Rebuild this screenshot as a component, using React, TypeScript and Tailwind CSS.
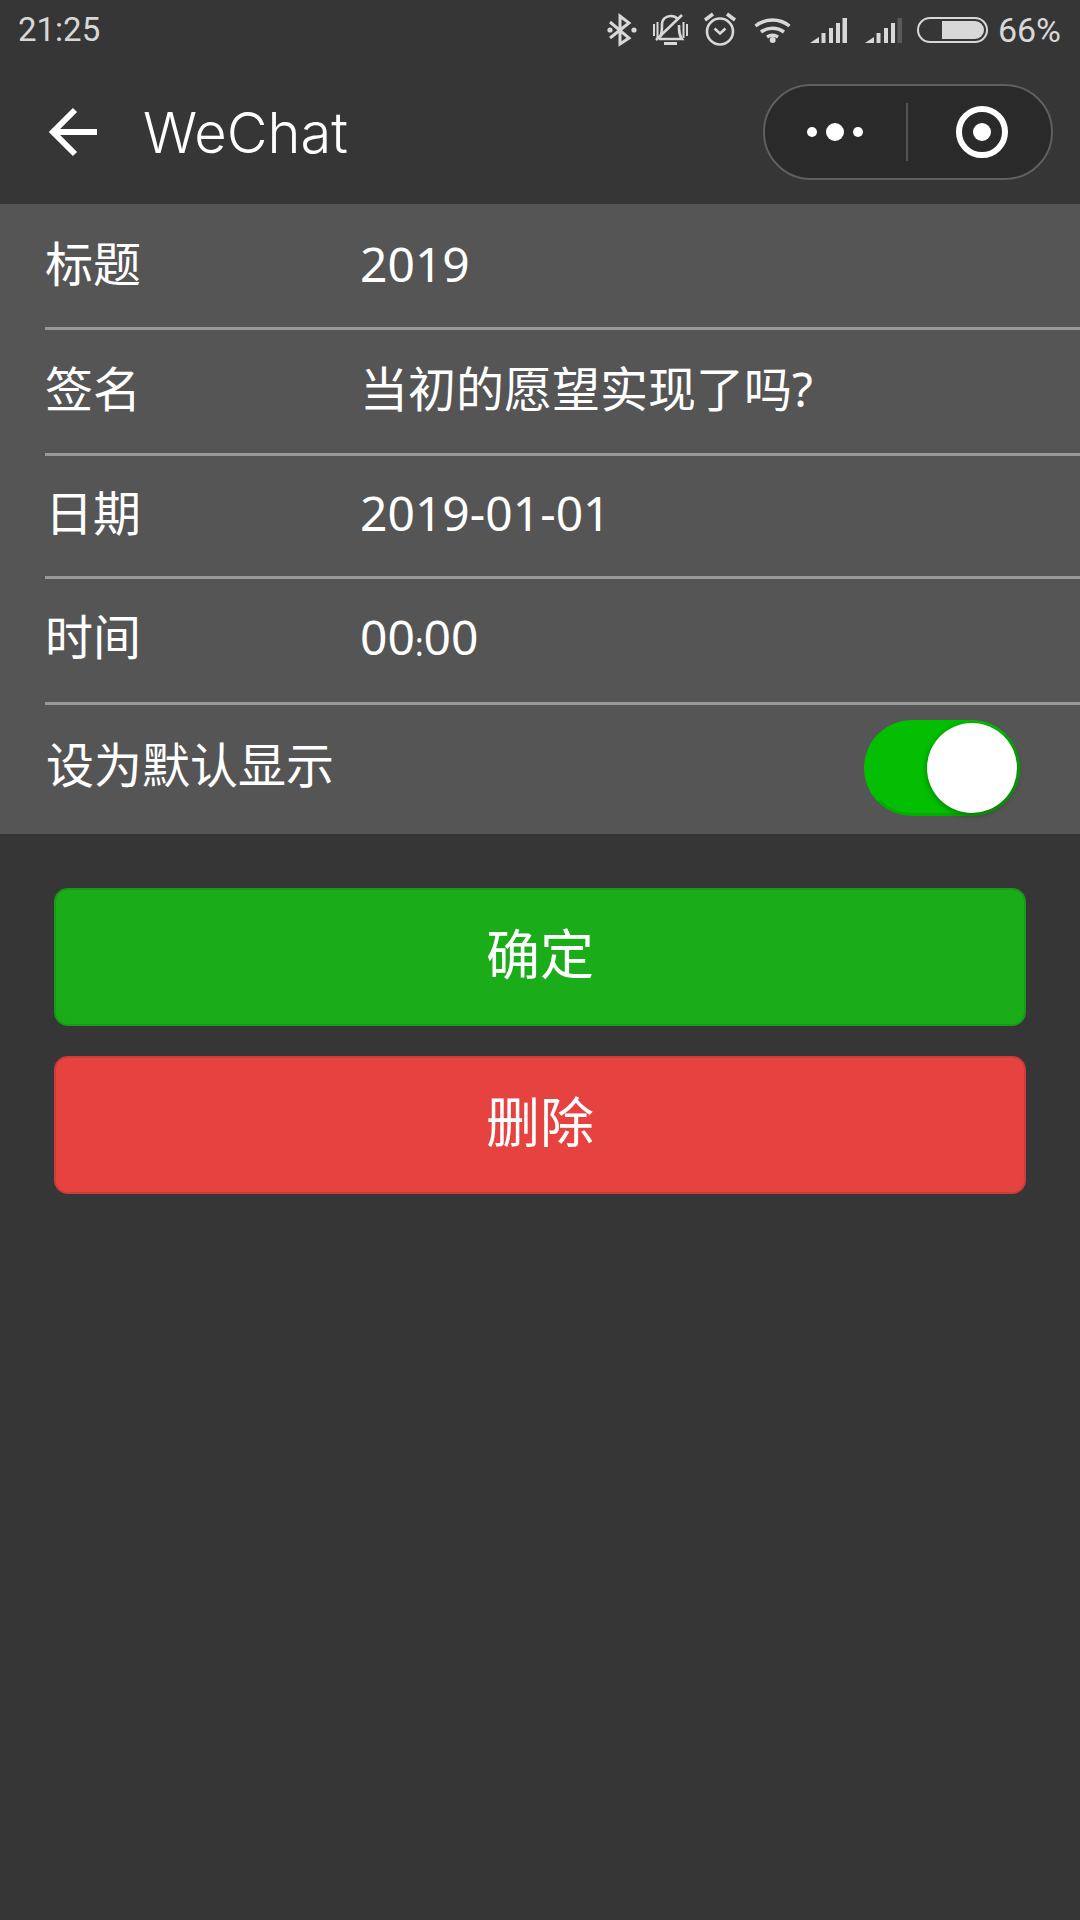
import React from 'react';

const sans = { fontFamily: '"Noto Sans", "Noto Sans CJK SC", sans-serif' };
const roboto = { fontFamily: 'Roboto, sans-serif', fontWeight: 400 };

// viewBox x starts at 605 on the page, y is the page's y
const StatusIcons = () => (
  <svg width="300" height="62" viewBox="605 0 300 62" className="text-[#d8d8d8]">
    {/* bluetooth */}
    <g fill="none" stroke="currentColor" strokeWidth="3">
      <path d="M610 22l19 16-9 6V16l9 7-19 15" />
    </g>
    <circle cx="610" cy="30" r="2.600" fill="currentColor" />
    <circle cx="634" cy="30" r="2.600" fill="currentColor" />
    {/* muted bell */}
    <g fill="none" stroke="currentColor" strokeWidth="2.600">
      <path d="M660 37c2-3 2-7 2-12 0-6 4-9 9-9 3 0 5 1 7 3M679 25c0 6 0 10 3 14H659" />
      <path d="M656 40L682 15" />
      <path d="M664 43.500h13" strokeWidth="3" />
      <path d="M654 24v12M657.500 22v16M683.500 22v16M687 24v12" strokeWidth="2" />
    </g>
    {/* alarm */}
    <g fill="none" stroke="currentColor" strokeWidth="2.600">
      <circle cx="720" cy="31.500" r="13" />
      <path d="M714.500 28.500l5.500 5 5.500-5" />
      <path d="M705 20l8-6M735 20l-8-6" strokeWidth="3.500" />
    </g>
    {/* wifi */}
    <g fill="none" stroke="currentColor" strokeWidth="3.500">
      <path d="M755.500 26c10-8 24-8 34 0" />
      <path d="M761 32c7-5 16-5 23 0" />
      <path d="M767 37c4-2.500 7-2.500 11 0" />
    </g>
    <circle cx="772.700" cy="40" r="3" fill="currentColor" />
    {/* signal 1 */}
    <g fill="currentColor">
      <path d="M810 43l9-6v6z" />
      <rect x="821.500" y="33" width="4" height="10" />
      <rect x="829" y="28" width="4" height="15" />
      <rect x="836" y="23" width="4" height="20" />
      <rect x="842.500" y="18" width="4.500" height="25" />
    </g>
    {/* signal 2 */}
    <g fill="currentColor">
      <path d="M865 43l9-6v6z" />
      <rect x="876.500" y="33" width="4" height="10" />
      <rect x="884" y="28" width="4" height="15" />
      <rect x="891" y="23" width="4" height="20" />
      <rect x="897.500" y="18" width="4.500" height="25" fill="#5a5a5a" />
    </g>
  </svg>
);

const Row = ({ label, value, className }: { label: string; value: React.ReactNode; className: string }) => (
  <div className={`${className} flex items-center text-[48px] text-white border-b-[3px] border-[#999999] ml-[45px]`}>
    <span className="w-[315px]">{label}</span>
    <span>{value}</span>
  </div>
);

const App = () => {
  return (
    <div className="h-[1920px] bg-[#363636] flex flex-col" style={sans}>
      {/* status bar */}
      <div className="h-[62px] flex items-center justify-between pl-[18px] pr-[19px] text-[#d8d8d8]">
        <span className="text-[33px] mb-[2px]" style={roboto}>21:25</span>
        <div className="flex items-center">
          <StatusIcons />
          <div className="ml-[12px] mb-[2px] w-[71px] h-[26px] rounded-full border-2 border-[#d8d8d8] flex justify-end p-[2px]">
            <div className="w-[42px] h-full bg-[#d8d8d8] rounded-r-full" />
          </div>
          <span className="ml-[10px] mb-[2px] text-[34px]" style={roboto}>66%</span>
        </div>
      </div>

      {/* nav bar */}
      <div className="h-[142px] flex items-center relative">
        <svg width="52" height="52" viewBox="0 0 52 52" className="ml-[48px] mb-[2px]" fill="none" stroke="white" strokeWidth="6">
          <path d="M49 26H5M27 4L5 26l22 22" />
        </svg>
        <span className="ml-[43px] text-[56px] font-light text-white" style={{ fontFamily: 'Inter, sans-serif' }}>WeChat</span>
        <div className="absolute right-[27px] top-[22px] w-[290px] h-[96px] rounded-full bg-[#2a2a2a] border-2 border-[#5f5f5f] flex items-center">
          <div className="flex-1 flex items-center justify-center gap-[9px] pr-[2px]">
            <div className="w-[10px] h-[10px] rounded-full bg-white" />
            <div className="w-[18px] h-[18px] rounded-full bg-white" />
            <div className="w-[10px] h-[10px] rounded-full bg-white" />
          </div>
          <div className="w-[2px] h-[58px] bg-[#555555]" />
          <div className="flex-1 flex items-center justify-center pl-[4px]">
            <div className="w-[52px] h-[52px] rounded-full border-[6px] border-white flex items-center justify-center">
              <div className="w-[18px] h-[18px] rounded-full bg-white" />
            </div>
          </div>
        </div>
      </div>

      {/* form */}
      <div className="bg-[#555555] h-[630px]">
        <Row className="h-[126px] pb-[4px]" label="标题" value="2019" />
        <Row className="h-[126px] pb-[6px]" label="签名" value="当初的愿望实现了吗?" />
        <Row className="h-[123px] pb-[6px]" label="日期" value="2019-01-01" />
        <Row
          className="h-[126px] pb-[8px]"
          label="时间"
          value={<>00<span className="text-[32px] relative top-[1px]">:</span>00</>}
        />
        <div className="h-[129px] flex items-center justify-between ml-[46px] pr-[60px] pb-[3px] text-white text-[48px]">
          <span className="mb-[6px]">设为默认显示</span>
          <div className="w-[156px] h-[96px] rounded-full bg-[#04be02] border-[3px] border-r-[#04ab02] border-b-[#04ab02] border-t-[#04be02] border-l-[#04be02] flex items-center justify-end">
            <div className="w-[90px] h-[90px] rounded-full bg-white shadow-[0_2px_6px_rgba(0,0,0,0.35)]" />
          </div>
        </div>
      </div>

      {/* buttons */}
      <div className="mt-[54px] mx-[54px] flex flex-col gap-[30px]">
        <div className="h-[138px] rounded-[14px] bg-[#1aad19] border-2 border-[#179b16] flex items-center justify-center pb-[6px] text-white text-[54px]">确定</div>
        <div className="h-[138px] rounded-[14px] bg-[#e64340] border-2 border-[#ce3c39] flex items-center justify-center pb-[6px] text-white text-[54px]">删除</div>
      </div>
    </div>
  );
};

export default App;
